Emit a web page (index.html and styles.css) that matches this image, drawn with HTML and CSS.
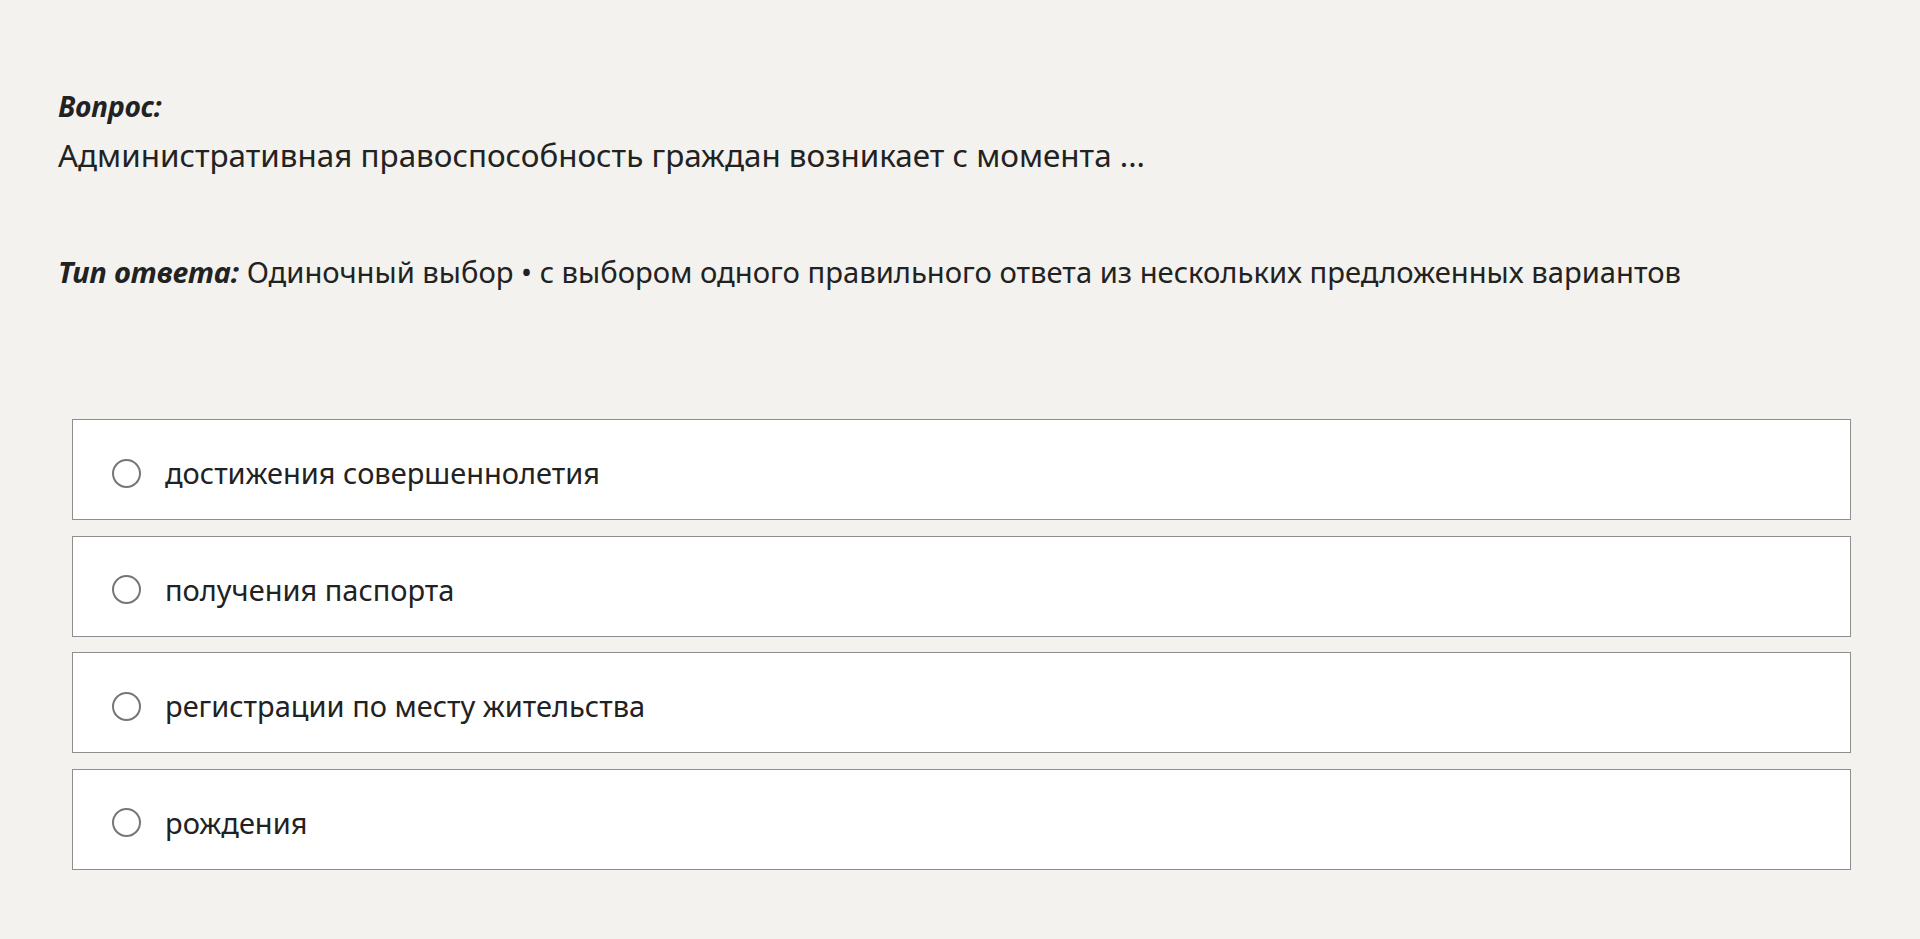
FILE: index.html
```html
<!DOCTYPE html>
<html lang="ru">
<head>
    <meta charset="UTF-8">
    <meta name="viewport" content="width=device-width, initial-scale=1.0">
    <title>Вопрос</title>
    <link rel="stylesheet" href="styles.css">
</head>
<body>
    <div class="quiz">
        <div class="question">
            <div class="label">Вопрос:</div>
            <div class="question-text">Административная правоспособность граждан возникает с момента ...</div>
            <div class="answer-type"><span class="label">Тип ответа:</span> Одиночный выбор • с выбором одного правильного ответа из нескольких предложенных вариантов</div>
        </div>

        <form class="options">
            <label class="option">
                <input type="radio" name="answer" value="1">
                <span>достижения совершеннолетия</span>
            </label>
            <label class="option">
                <input type="radio" name="answer" value="2">
                <span>получения паспорта</span>
            </label>
            <label class="option">
                <input type="radio" name="answer" value="3">
                <span>регистрации по месту жительства</span>
            </label>
            <label class="option">
                <input type="radio" name="answer" value="4">
                <span>рождения</span>
            </label>
        </form>
    </div>
</body>
</html>
```
FILE: styles.css
```css
:root {
    --bg-color: #f3f2ee;
    --text-color: #222222;
    --border-color: #8e8e8e;
    --radio-color: #767676;
}

body {
    font-family: "Noto Sans", "Open Sans", sans-serif;
    margin: 0;
    padding: 0;
    background-color: var(--bg-color);
    color: var(--text-color);
    min-height: 100vh;
}

.quiz {
    padding-top: 88px;
}

.question {
    padding: 0 58px;
}

.label {
    font-size: 28px;
    line-height: 36px;
    font-style: italic;
    font-weight: 700;
}

.question-text {
    font-size: 31.4px;
    line-height: 40px;
    margin-top: 11px;
}

.answer-type {
    font-size: 29.2px;
    line-height: 38px;
    margin-top: 78px;
}

.answer-type .label {
    font-size: 29px;
    line-height: 38px;
}

.options {
    display: flex;
    flex-direction: column;
    gap: 15.5px;
    margin: 128px 69px 0 72px;
}

.option {
    display: flex;
    align-items: center;
    gap: 24px;
    height: 101px;
    box-sizing: border-box;
    padding: 34px 20px 27px 39px;
    background-color: white;
    border: 1px solid var(--border-color);
    font-size: 29px;
    line-height: 38px;
    cursor: pointer;
}

.option input {
    appearance: none;
    margin: 0;
    width: 29px;
    height: 29px;
    flex-shrink: 0;
    border: 2px solid var(--radio-color);
    border-radius: 50%;
    background-color: white;
    box-sizing: border-box;
}

.option input:checked {
    background: radial-gradient(circle, var(--radio-color) 40%, white 45%);
}
```
